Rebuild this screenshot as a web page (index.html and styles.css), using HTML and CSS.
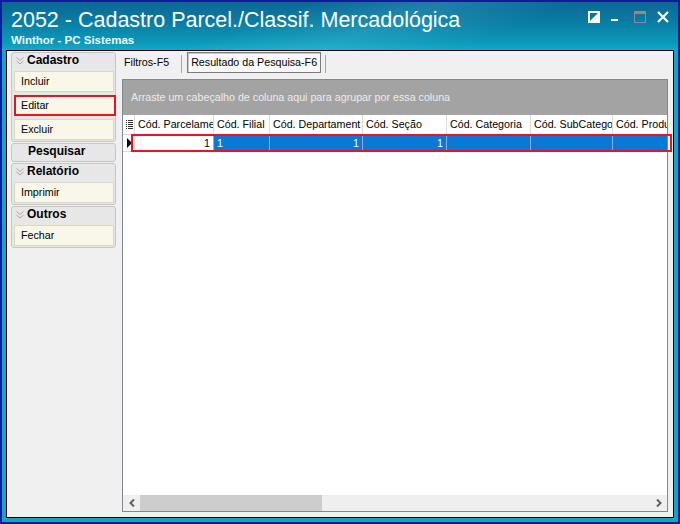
FILE: index.html
```html
<!DOCTYPE html>
<html lang="pt-BR">
<head>
    <meta charset="UTF-8">
    <title>2052 - Cadastro Parcel./Classif. Mercadológica</title>
    <link rel="stylesheet" href="styles.css">
</head>
<body>
<div class="window">
    <div class="titlebar">
        <div class="titles">
            <div class="app-title">2052 - Cadastro Parcel./Classif. Mercadológica</div>
            <div class="app-sub">Winthor - PC Sistemas</div>
        </div>
        <div class="win-buttons">
            <svg width="12" height="12" viewBox="0 0 12 12"><rect x="1" y="1" width="10" height="10" fill="none" stroke="#fff" stroke-width="2"/><polygon points="11,1 11,11 1,11" fill="#fff"/></svg>
            <svg width="12" height="12" viewBox="0 0 12 12"><rect x="0" y="8" width="7" height="2" fill="#fff"/></svg>
            <svg width="12" height="12" viewBox="0 0 12 12"><rect x="0.5" y="0.5" width="11" height="11" fill="none" stroke="#8c8c8c"/><rect x="0" y="0" width="12" height="3" fill="#8c8c8c"/></svg>
            <svg width="12" height="12" viewBox="0 0 12 12"><path d="M1 1 L11 11 M11 1 L1 11" stroke="#fff" stroke-width="2.2"/></svg>
        </div>
    </div>

    <div class="client">
        <!-- menu lateral -->
        <div class="side">
            <div class="group">
                <div class="group-head"><svg class="chev" viewBox="0 0 8 8"><path d="M0.5 0.5 L4 3.5 L7.5 0.5 M0.5 4 L4 7 L7.5 4" fill="none" stroke="#a9a9a9"/></svg>Cadastro</div>
                <div class="items">
                    <div class="item">Incluir</div>
                    <div class="item item-marked">Editar</div>
                    <div class="item">Excluir</div>
                </div>
            </div>
            <div class="group group-flat">
                <div class="group-head">Pesquisar</div>
            </div>
            <div class="group">
                <div class="group-head"><svg class="chev" viewBox="0 0 8 8"><path d="M0.5 0.5 L4 3.5 L7.5 0.5 M0.5 4 L4 7 L7.5 4" fill="none" stroke="#a9a9a9"/></svg>Relatório</div>
                <div class="items">
                    <div class="item">Imprimir</div>
                </div>
            </div>
            <div class="group">
                <div class="group-head"><svg class="chev" viewBox="0 0 8 8"><path d="M0.5 0.5 L4 3.5 L7.5 0.5 M0.5 4 L4 7 L7.5 4" fill="none" stroke="#a9a9a9"/></svg>Outros</div>
                <div class="items">
                    <div class="item">Fechar</div>
                </div>
            </div>
        </div>

        <div class="pane">
            <div class="tabs">
                <span class="tab">Filtros-F5</span>
                <span class="tab-sep"></span>
                <span class="tab tab-active">Resultado da Pesquisa-F6</span>
                <span class="tab-sep"></span>
            </div>

            <div class="grid">
                <div class="group-by">Arraste um cabeçalho de coluna aqui para agrupar por essa coluna</div>

                <div class="cols grid-head">
                    <div class="cell cell-ind"><svg width="7" height="9" viewBox="0 0 7 9"><rect x="0" y="0" width="1" height="1" fill="#333"/><rect x="2" y="0" width="5" height="1" fill="#333"/><rect x="0" y="2" width="1" height="1" fill="#333"/><rect x="2" y="2" width="5" height="1" fill="#333"/><rect x="0" y="4" width="1" height="1" fill="#333"/><rect x="2" y="4" width="5" height="1" fill="#333"/><rect x="0" y="6" width="1" height="1" fill="#333"/><rect x="2" y="6" width="5" height="1" fill="#333"/><rect x="0" y="8" width="1" height="1" fill="#333"/><rect x="2" y="8" width="5" height="1" fill="#333"/></svg></div>
                    <div class="cell">Cód. Parcelame</div>
                    <div class="cell">Cód. Filial</div>
                    <div class="cell">Cód. Departament</div>
                    <div class="cell">Cód. Seção</div>
                    <div class="cell">Cód. Categoria</div>
                    <div class="cell">Cód. SubCatego</div>
                    <div class="cell cell-last">Cód. Produ</div>
                </div>

                <div class="cols grid-row">
                    <div class="cell cell-ind"><svg width="5" height="10" viewBox="0 0 5 10"><polygon points="0,0 5,5 0,10" fill="#000"/></svg></div>
                    <div class="cell cell-focus">1</div>
                    <div class="cell">1</div>
                    <div class="cell num">1</div>
                    <div class="cell num">1</div>
                    <div class="cell"></div>
                    <div class="cell"></div>
                    <div class="cell cell-last"></div>
                </div>

                <div class="grid-body"></div>

                <div class="hscroll">
                    <div class="sb-btn"><svg width="6" height="8" viewBox="0 0 6 8"><path d="M5 0.5 L1.5 4 L5 7.5" fill="none" stroke="#606060" stroke-width="2"/></svg></div>
                    <div class="sb-thumb"></div>
                    <div class="sb-track"></div>
                    <div class="sb-btn"><svg width="6" height="8" viewBox="0 0 6 8"><path d="M1 0.5 L4.5 4 L1 7.5" fill="none" stroke="#606060" stroke-width="2"/></svg></div>
                </div>

                <div class="row-mark"></div>
            </div>
        </div>
    </div>
</div>
</body>
</html>
```

FILE: styles.css
```css
/* Janela */
body {
    margin: 0;
    background: #0a1c9a;
    font-family: "Liberation Sans", Arial, sans-serif;
    font-size: 10.7px;
    color: #000;
}

.window {
    height: 524px;
    box-sizing: border-box;
    border: 2px solid #0b1d9e;
    background: #14a5c5;
    display: flex;
    flex-direction: column;
}

.titlebar {
    height: 48px;
    box-sizing: border-box;
    padding: 7px 9px 0 9px;
    display: flex;
    justify-content: space-between;
    align-items: flex-start;
    color: #fff;
    background:
        linear-gradient(160deg, rgba(255, 255, 255, 0) 38%, rgba(120, 220, 240, 0.18) 55%, rgba(255, 255, 255, 0) 72%),
        linear-gradient(180deg, #0b6890 0%, #0a7ea5 45%, #0b9aba 85%, #16a8c6 100%);
}

.app-title {
    font-size: 21.5px;
    line-height: 23px;
}

.app-sub {
    font-size: 11.5px;
    font-weight: bold;
    line-height: 13px;
    margin-top: 1.5px;
    color: #eef8fb;
}

.win-buttons {
    display: flex;
    gap: 11px;
    margin-top: 2px;
}

.client {
    flex: 1;
    min-height: 0;
    margin: 0 4px 4px;
    border: 1px solid #000;
    background: #f0f0f0;
    display: flex;
}

/* Menu lateral */
.side {
    width: 105px;
    margin: 1px 0 0 4px;
}

.group {
    border: 1px solid #c6c6c6;
    border-radius: 3px;
    background: #e7e7e7;
    margin-bottom: 1px;
    padding-bottom: 1px;
}

.group-head {
    display: flex;
    align-items: center;
    height: 15px;
    line-height: 15px;
    padding: 0 0 2px 4px;
    font-size: 12px;
    font-weight: bold;
}

.group-flat .group-head {
    padding: 0 0 1px 16px;
}

.chev {
    width: 8px;
    height: 8px;
    margin-right: 3px;
}

.items {
    padding-top: 1px;
    display: flex;
    flex-direction: column;
    gap: 3px;
}

.item {
    height: 21px;
    box-sizing: border-box;
    margin: 0 1px 0 2px;
    border: 1px solid #dcd8bc;
    background: #f8f7e9;
    padding-left: 6px;
    line-height: 19px;
}

.item-marked {
    border: 2px solid #e3171f;
    padding-left: 5px;
    line-height: 17px;
    margin-right: -1px;
}

/* Abas */
.pane {
    flex: 1;
    min-width: 0;
    margin: 0 5px 5px 6px;
    display: flex;
    flex-direction: column;
}

.tabs {
    display: flex;
    height: 21px;
    padding-top: 1px;
    margin-bottom: 6px;
}

.tab {
    border: 1px solid transparent;
    padding: 0 11px 0 1px;
    line-height: 19px;
    white-space: nowrap;
}

.tab-sep {
    width: 1px;
    background: #a3a3a3;
    margin: 3px 5px 0 0;
}

.tab-active {
    width: 134px;
    box-sizing: border-box;
    padding: 0;
    text-align: center;
    border-color: #7c7c7c;
    box-shadow: inset 1px 1px 0 #c9c9c9;
    background: #f9f9f9;
    margin-right: 4px;
}

/* Grade */
.grid {
    flex: 1;
    position: relative;
    border: 1px solid #828790;
    background: #fff;
    display: flex;
    flex-direction: column;
}

.group-by {
    height: 35px;
    line-height: 35px;
    padding-left: 8px;
    background: #a3a3a3;
    color: #ececec;
    white-space: nowrap;
}

.cols {
    display: grid;
    grid-template-columns: 12px 79px 56px 93px 84px 84px 82px 1fr;
}

.cell {
    box-sizing: border-box;
    border-right: 1px solid #dcdcdc;
    padding: 0 0 0 3px;
    overflow: hidden;
    white-space: nowrap;
}

.cell-last {
    border-right: none;
}

.cell-ind {
    padding: 0 0 0 3px;
    display: flex;
    align-items: center;
}

.grid-head {
    height: 19px;
    line-height: 19px;
    border-bottom: 1px solid #d8d8d8;
}

.grid-row {
    height: 16px;
    line-height: 16px;
    border-bottom: 1px solid #d8d8d8;
}

.grid-row .cell {
    background: #0a78d7;
    color: #fff;
    border-right-color: #7fb3e6;
}

.grid-row .cell-ind {
    background: #fff;
    border-right-color: #dcdcdc;
    padding-left: 4px;
}

.grid-row .cell-focus {
    background: #fff;
    color: #000;
    text-align: right;
    padding-right: 3px;
}

.grid-row .num {
    text-align: right;
    padding-right: 3px;
}

.grid-body {
    flex: 1;
}

.hscroll {
    height: 16px;
    display: flex;
    background: #efefef;
}

.sb-btn {
    width: 17px;
    display: flex;
    align-items: center;
    justify-content: center;
}

.sb-thumb {
    width: 182px;
    background: #cdcdcd;
}

.sb-track {
    flex: 1;
}

/* destaque vermelho da linha selecionada */
.row-mark {
    position: absolute;
    left: 8px;
    top: 54px;
    width: 541px;
    height: 18px;
    box-sizing: border-box;
    border: 2px solid #e3171f;
    pointer-events: none;
}
```
